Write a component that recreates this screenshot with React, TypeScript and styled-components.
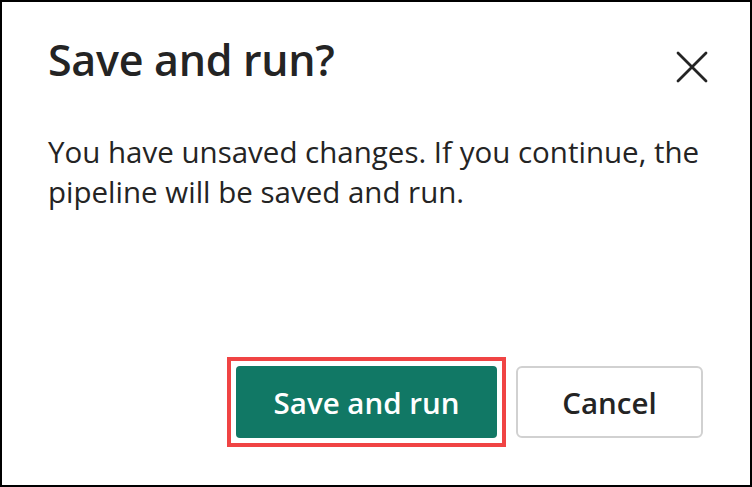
import styled, { createGlobalStyle } from "styled-components";

const GlobalStyle = createGlobalStyle`
    html, body {
        margin: 0;
        padding: 0;
        background: #ffffff;
    }
    * {
        box-sizing: border-box;
    }
`

const Dialog = styled.div`
    display: flex;
    flex-direction: column;
    width: 752px;
    height: 487px;
    border: 2px solid #000000;
    padding: 30px 47px 38px 46px;
    font-family: "Open Sans", "Noto Sans", sans-serif;
    color: #242424;
    background: #ffffff;
`

const Header = styled.div`
    display: flex;
    justify-content: space-between;
    align-items: flex-start;
`

const Title = styled.h2`
    margin: 0;
    font-size: 43px;
    font-weight: 600;
    line-height: 56px;
    letter-spacing: -0.3px;
`

const CloseButton = styled.button`
    display: flex;
    align-items: center;
    justify-content: center;
    width: 32px;
    height: 32px;
    margin-top: 19px;
    margin-right: -5px;
    padding: 0;
    border: none;
    background: transparent;
    cursor: pointer;
`

const Message = styled.p`
    margin: 44px 0 0 0;
    font-size: 29.5px;
    line-height: 40px;
`

const Footer = styled.div`
    display: flex;
    justify-content: flex-end;
    align-items: center;
    gap: 10px;
    margin-top: auto;
`

const Highlight = styled.span`
    display: inline-flex;
    padding: 5px;
    border: 4px solid #f04444;
`

const Button = styled.button<{ $primary?: boolean }>`
    height: 72px;
    width: ${p => (p.$primary ? "261px" : "187px")};
    border-radius: ${p => (p.$primary ? "4px" : "6px")};
    border: ${p => (p.$primary ? "none" : "2px solid #d1d1d1")};
    background: ${p => (p.$primary ? "#117865" : "#ffffff")};
    color: ${p => (p.$primary ? "#ffffff" : "#242424")};
    font-family: "Open Sans", "Noto Sans", sans-serif;
    font-size: 29.5px;
    font-weight: 600;
    cursor: pointer;
`

const App = () => {
    return (
        <>
            <GlobalStyle />
            <Dialog>
                <Header>
                    <Title>Save and run?</Title>
                    <CloseButton aria-label="Close">
                        <svg width="32" height="32" viewBox="0 0 32 32">
                            <path d="M2 2 L30 30 M30 2 L2 30" stroke="#242424" strokeWidth="2.8" strokeLinecap="round" fill="none" />
                        </svg>
                    </CloseButton>
                </Header>
                <Message>
                    You have unsaved changes. If you continue, the pipeline will be saved and run.
                </Message>
                <Footer>
                    <Highlight>
                        <Button $primary>Save and run</Button>
                    </Highlight>
                    <Button>Cancel</Button>
                </Footer>
            </Dialog>
        </>
    )
}

export default App;
